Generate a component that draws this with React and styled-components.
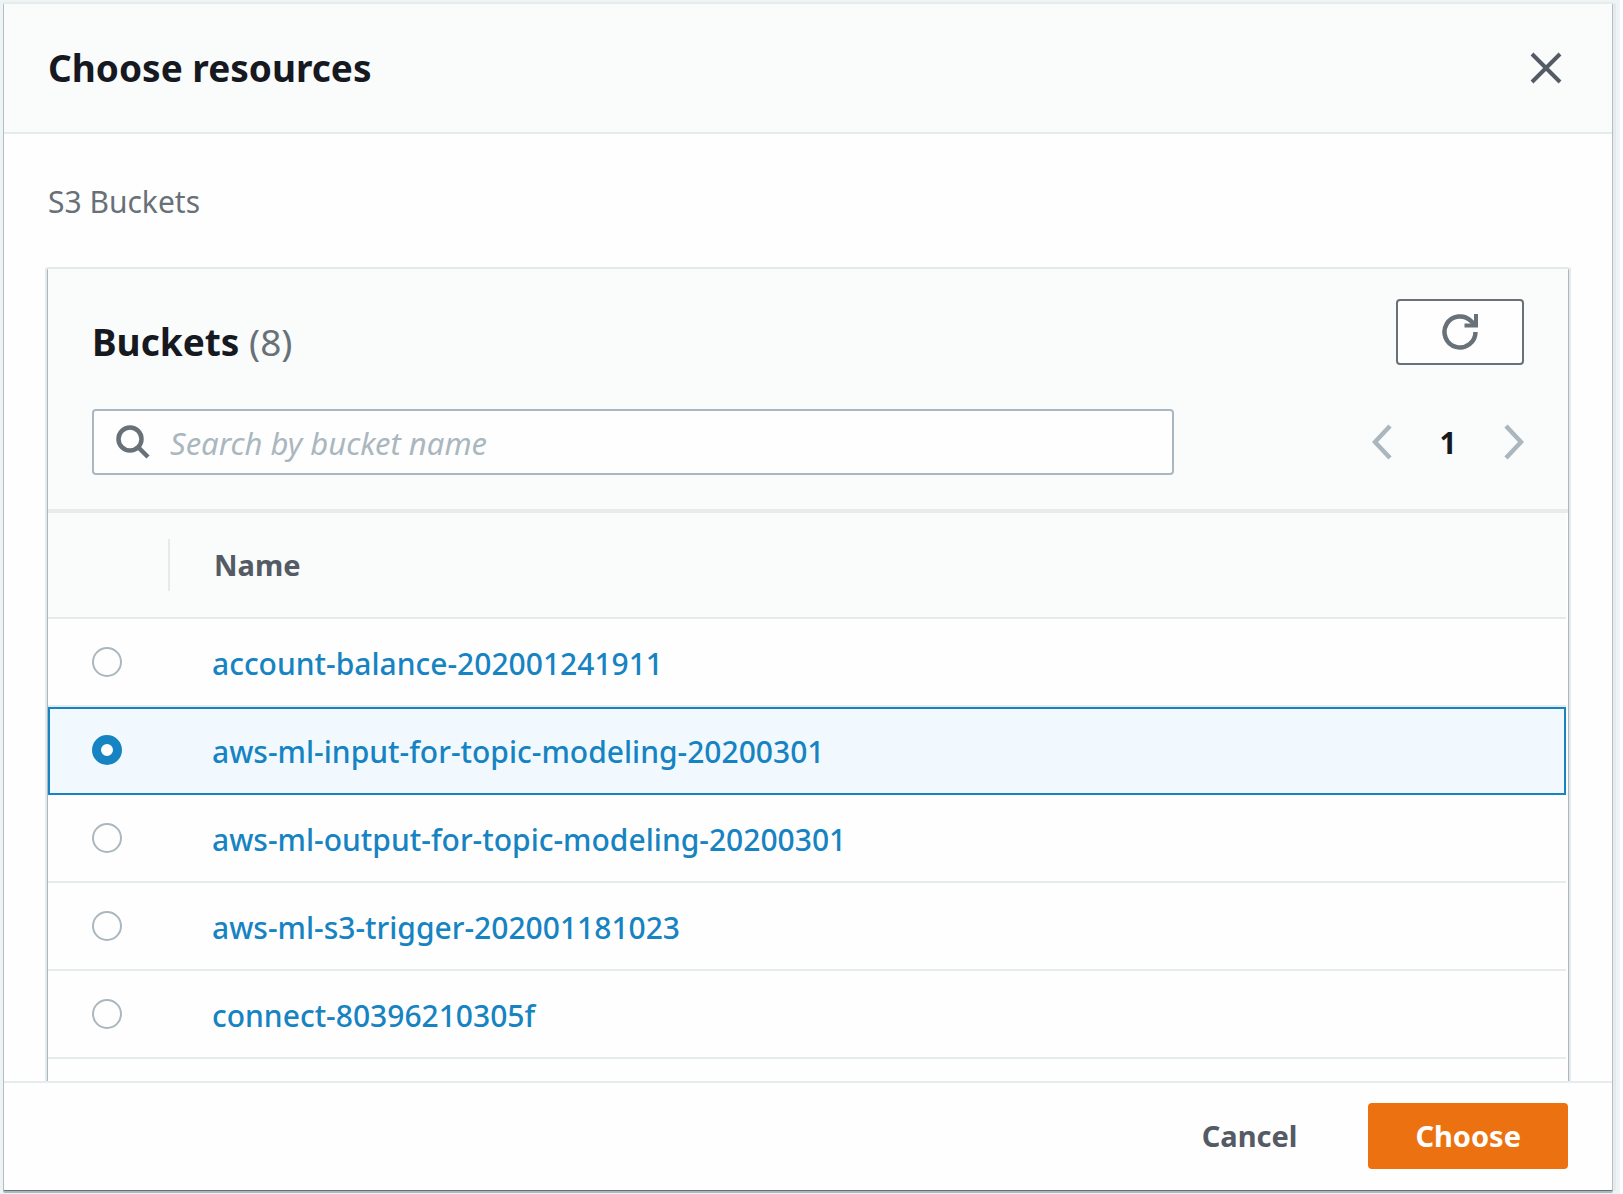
import React, { useState } from "react";
import styled, { createGlobalStyle, css } from "styled-components";

const GlobalStyle = createGlobalStyle`
  *, *::before, *::after { box-sizing: border-box; }
  body {
    margin: 0;
    background: #eef3f4;
    color: #16191f;
    font-family: "Noto Sans", "Open Sans", sans-serif;
    font-size: 30px;
    line-height: 44px;
  }
  button, input { font: inherit; color: inherit; }
`;

const Page = styled.div`
  height: 100vh;
  padding: 3px 7px 3px 3px;
  border-right: 3px solid #ffffff;
  background: #eef3f4;
`;

const Dialog = styled.section`
  display: flex;
  flex-direction: column;
  height: 100%;
  border: 1px solid #b3bfc4;
  border-top-color: #e7ecec;
  border-bottom-color: #687078;
  border-radius: 2px;
  background: #fefefe;
  box-shadow: 0 2px 0 #aab7bf, 3px 0 0 #e6eaec, 0 -1px 0 #e6eaec;
`;

const DialogHeader = styled.header`
  display: flex;
  align-items: center;
  justify-content: space-between;
  height: 130px;
  padding: 0 50px 0 44px;
  border-bottom: 2px solid #e6eaea;
  background: #fafbfb;
`;

const Title = styled.h1`
  margin: 0;
  font-size: 37px;
  line-height: 48px;
  font-weight: 700;
`;

const IconButton = styled.button`
  display: flex;
  padding: 0;
  border: 0;
  background: none;
  color: ${(p) => p.$color};
  cursor: pointer;
`;

const DialogBody = styled.div`
  display: flex;
  flex: 1;
  flex-direction: column;
  min-height: 0;
  overflow: hidden;
  padding: 46px 41px 0;
`;

const Crumb = styled.p`
  margin: 0 0 43px;
  padding-left: 3px;
  color: #687078;
`;

const Card = styled.div`
  flex: 1;
  border: 2px solid #e4eaec;
  border-bottom: 0;
  border-radius: 3px 3px 0 0;
  box-shadow: inset 1px 0 0 #aab7bf, inset -1px 0 0 #aab7bf;
  padding: 0 1px;
`;

const CardHeader = styled.div`
  padding: 30px 44px 34px;
  border-bottom: 4px solid #e7ebec;
  background: #fafbfb;
`;

const HeadingRow = styled.div`
  display: flex;
  align-items: flex-start;
  justify-content: space-between;
  margin-bottom: 44px;
`;

const Heading = styled.h2`
  margin: 0;
  padding-top: 20px;
  font-size: 37px;
  line-height: 46px;
  font-weight: 700;
`;

const Count = styled.span`
  color: #687078;
  font-weight: 400;
`;

const RefreshButton = styled.button`
  display: flex;
  align-items: center;
  justify-content: center;
  width: 128px;
  height: 66px;
  border: 2px solid #687078;
  border-radius: 4px;
  background: #fefefe;
  color: #687078;
  cursor: pointer;
`;

const FilterRow = styled.div`
  display: flex;
  align-items: center;
  gap: 198px;
`;

const SearchBox = styled.label`
  display: flex;
  flex: 1;
  align-items: center;
  gap: 20px;
  height: 66px;
  min-width: 0;
  padding: 0 22px;
  border: 2px solid #aab7bf;
  border-radius: 4px;
  background: #fefefe;
  color: #687078;
`;

const SearchInput = styled.input`
  flex: 1;
  min-width: 0;
  height: 46px;
  padding: 2px 0 0;
  border: 0;
  outline: 0;
  background: none;
  color: #16191f;
  font-size: 31px;
  &::placeholder { color: #aab7bf; font-style: italic; opacity: 1; }
`;

const Pagination = styled.nav`
  display: flex;
  align-items: center;
  justify-content: space-between;
  width: 152px;
`;

const PageNumber = styled.span`
  padding-top: 2px;
  font-weight: 700;
`;

const Table = styled.table`
  width: 100%;
  padding-right: 2px;
  border-spacing: 0;
  table-layout: fixed;
`;

const HeadCell = styled.th`
  height: 106px;
  padding: ${(p) => (p.$narrow ? "0" : "0 44px")};
  border-bottom: 2px solid #e6eaea;
  background: #fafbfb;
  color: #545b64;
  font-size: 29px;
  text-align: left;
  width: ${(p) => (p.$narrow ? "122px" : "auto")};
`;

const Divider = styled.div`
  height: 52px;
  border-right: 2px solid #e6eaec;
`;

const Cell = styled.td`
  height: 88px;
  padding: 0 44px;
  border: 0 solid #e6ebed;
  border-bottom-width: 2px;
  &:last-child { padding: 4px 42px 0; }
  ${(p) => p.$selected && css`
    border-color: #1683c2;
    border-top-width: 2px;
    background: #f1f9ff;
    &:first-child { border-left-width: 2px; padding: 0 42px 2px; }
    &:last-child { border-right-width: 2px; padding-top: 2px; }
  `}
`;

const Radio = styled.input`
  display: block;
  appearance: none;
  width: 30px;
  height: 30px;
  margin: 0;
  border: 2px solid #aab7bf;
  border-radius: 50%;
  background: #fefefe;
  cursor: pointer;
  &:checked { border: 9px solid #1683c2; }
`;

const BucketLink = styled.a`
  color: #1683c2;
  font-weight: 500;
  text-decoration: none;
`;

const DialogFooter = styled.footer`
  display: flex;
  align-items: center;
  justify-content: flex-end;
  gap: 24px;
  height: 109px;
  padding: 0 44px 2px;
  border-top: 2px solid #e6ebed;
`;

const Button = styled.button`
  height: 66px;
  padding: 0 47px;
  border: 0;
  border-radius: 4px;
  background: ${(p) => (p.$primary ? "#ec7211" : "transparent")};
  color: ${(p) => (p.$primary ? "#fefefe" : "#545b64")};
  font-size: 29px;
  font-weight: 700;
  cursor: pointer;
`;

const CloseIcon = () => (
  <svg width="32" height="32" viewBox="0 0 32 32" fill="none" stroke="currentColor" strokeWidth="4" aria-hidden="true">
    <path d="M2 2 30 30M30 2 2 30" />
  </svg>
);

const RefreshIcon = () => (
  <svg width="36" height="36" viewBox="0 0 36 36" fill="none" stroke="currentColor" strokeWidth="4.500" aria-hidden="true">
    <path d="M33.500 18A15.500 15.500 0 1 1 29 7L33 11" />
    <path d="M34 0V11.500H22.500" strokeWidth="4" />
  </svg>
);

const SearchIcon = () => (
  <svg width="34" height="34" viewBox="0 0 34 34" fill="none" stroke="currentColor" strokeWidth="4.500" aria-hidden="true">
    <circle cx="14" cy="14" r="11.500" />
    <path d="M22 22 32 32" />
  </svg>
);

const Chevron = ({ right }) => (
  <svg width="20" height="36" viewBox="0 0 20 36" fill="none" stroke="currentColor" strokeWidth="4.500" aria-hidden="true">
    <path d={right ? "M2 2 17 18 2 34" : "M18 2 3 18 18 34"} />
  </svg>
);

const buckets = [
  "account-balance-202001241911",
  "aws-ml-input-for-topic-modeling-20200301",
  "aws-ml-output-for-topic-modeling-20200301",
  "aws-ml-s3-trigger-202001181023",
  "connect-80396210305f",
];

export default function App() {
  const [selected, setSelected] = useState(buckets[1]);
  return (
    <Page>
      <GlobalStyle />
      <Dialog role="dialog" aria-labelledby="dialog-title">
        <DialogHeader>
          <Title id="dialog-title">Choose resources</Title>
          <IconButton type="button" $color="#545b64" aria-label="Close"><CloseIcon /></IconButton>
        </DialogHeader>
        <DialogBody>
          <Crumb>S3 Buckets</Crumb>
          <Card>
            <CardHeader>
              <HeadingRow>
                <Heading>Buckets <Count>(8)</Count></Heading>
                <RefreshButton type="button" aria-label="Refresh"><RefreshIcon /></RefreshButton>
              </HeadingRow>
              <FilterRow>
                <SearchBox>
                  <SearchIcon />
                  <SearchInput type="text" placeholder="Search by bucket name" aria-label="Search by bucket name" />
                </SearchBox>
                <Pagination aria-label="Pages">
                  <IconButton type="button" $color="#aab7bf" aria-label="Previous page"><Chevron /></IconButton>
                  <PageNumber>1</PageNumber>
                  <IconButton type="button" $color="#aab7bf" aria-label="Next page"><Chevron right /></IconButton>
                </Pagination>
              </FilterRow>
            </CardHeader>
            <Table>
              <thead>
                <tr>
                  <HeadCell $narrow aria-label="Selection"><Divider /></HeadCell>
                  <HeadCell scope="col">Name</HeadCell>
                </tr>
              </thead>
              <tbody>
                {buckets.map((name) => (
                  <tr key={name}>
                    <Cell $selected={name === selected}>
                      <Radio
                        type="radio"
                        name="bucket"
                        aria-label={name}
                        checked={name === selected}
                        onChange={() => setSelected(name)}
                      />
                    </Cell>
                    <Cell $selected={name === selected}>
                      <BucketLink href="#">{name}</BucketLink>
                    </Cell>
                  </tr>
                ))}
              </tbody>
            </Table>
          </Card>
        </DialogBody>
        <DialogFooter>
          <Button type="button">Cancel</Button>
          <Button type="button" $primary>Choose</Button>
        </DialogFooter>
      </Dialog>
    </Page>
  );
}
